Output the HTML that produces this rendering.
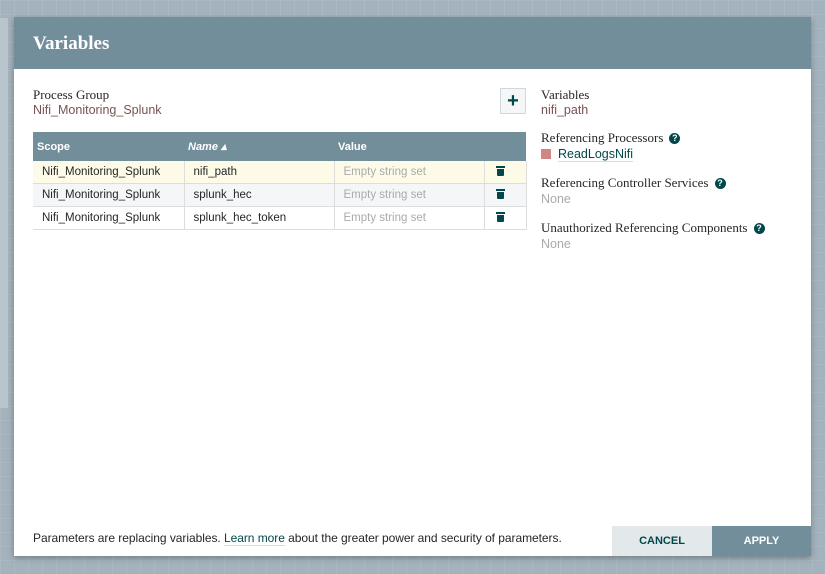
<!DOCTYPE html>
<html><head><style>
body{margin:0;width:825px;height:574px;background:#a3b2bc;position:relative;overflow:hidden;font-family:"Liberation Sans",sans-serif;}
.bg{position:absolute;inset:0;background-image:linear-gradient(rgba(255,255,255,.08) 1px,transparent 1px),linear-gradient(90deg,rgba(255,255,255,.08) 1px,transparent 1px);background-size:14px 14px;}
.side{position:absolute;left:0;top:18px;width:8px;height:390px;background:#b9c5cc;}
.dlg{position:absolute;left:14px;top:17px;width:797px;height:539px;background:#fff;box-shadow:0 2px 6px rgba(0,0,0,.3);}
.hdr{height:52px;background:#728e9b;color:#fff;font-family:"Liberation Serif",serif;font-weight:bold;font-size:19px;line-height:54px;padding-left:19px;}
.abs{position:absolute;font-size:12px;}
.lbl{color:#262626;font-family:"Liberation Serif",serif;font-size:13px;}
.val{color:#775351;font-size:12.5px;}
.none{color:#aaa;font-size:12.5px;}
table{position:absolute;left:19px;top:115px;border-collapse:collapse;font-size:11.5px;}
th{background:#728e9b;color:#fff;text-align:left;height:29px;padding:0 4px;font-size:11px;}
td{height:22px;padding:0 9px;border-right:1px solid #ddd;border-bottom:1px solid #ddd;color:#262626;}
td.t{padding:0 0 0 12px;}
.q{display:inline-block;width:11px;height:11px;border-radius:50%;background:#004849;color:#fff;font-size:9px;text-align:center;line-height:11px;font-weight:bold;font-family:"Liberation Sans";margin-left:6px;vertical-align:1px;}
.tr{display:inline-block;width:7px;height:7px;background:#004849;border-radius:0 0 1px 1px;position:relative;vertical-align:middle;top:1px;}
.tr:before{content:"";position:absolute;left:-1px;top:-3px;width:9px;height:2px;background:#004849;}
</style></head><body>
<div class="bg"></div><div class="side"></div>
<div class="dlg">
<div class="hdr">Variables</div>
<div class="abs lbl" style="left:19px;top:70px">Process Group</div>
<div class="abs val" style="left:19px;top:86px">Nifi_Monitoring_Splunk</div>
<div class="abs" style="left:486px;top:71px;width:24px;height:24px;border:1px solid #cfd8dc;background:#f4f6f7;text-align:center;line-height:24px;font-size:20px;font-weight:bold;color:#004849">+</div>
<table>
<tr><th style="width:143px">Scope</th><th style="width:142px;font-style:italic">Name ▴</th><th style="width:142px">Value</th><th style="width:34px"></th></tr>
<tr style="background:#fdfbe8"><td>Nifi_Monitoring_Splunk</td><td>nifi_path</td><td style="color:#aaa">Empty string set</td><td class="t"><span class="tr"></span></td></tr>
<tr style="background:#f4f6f7"><td>Nifi_Monitoring_Splunk</td><td>splunk_hec</td><td style="color:#aaa">Empty string set</td><td class="t"><span class="tr"></span></td></tr>
<tr><td>Nifi_Monitoring_Splunk</td><td>splunk_hec_token</td><td style="color:#aaa">Empty string set</td><td class="t"><span class="tr"></span></td></tr>
</table>
<div class="abs lbl" style="left:527px;top:70px">Variables</div>
<div class="abs val" style="left:527px;top:86px">nifi_path</div>
<div class="abs lbl" style="left:527px;top:113px">Referencing Processors<span class="q">?</span></div>
<div class="abs" style="left:527px;top:132px;width:10px;height:10px;background:#d18686"></div>
<div class="abs" style="left:544px;top:130px;color:#004849;font-size:12.5px;border-bottom:1px solid #cde">ReadLogsNifi</div>
<div class="abs lbl" style="left:527px;top:158px">Referencing Controller Services<span class="q">?</span></div>
<div class="abs none" style="left:527px;top:175px">None</div>
<div class="abs lbl" style="left:527px;top:203px">Unauthorized Referencing Components<span class="q">?</span></div>
<div class="abs none" style="left:527px;top:220px">None</div>
<div class="abs" style="left:19px;top:514px;color:#262626;font-size:12px;letter-spacing:-0.05px">Parameters are replacing variables. <span style="color:#004849;border-bottom:1px solid #cde">Learn more</span> about the greater power and security of parameters.</div>
<div class="abs" style="left:598px;top:509px;width:100px;height:30px;background:#e3e8eb;color:#004849;text-align:center;line-height:31px;font-size:11px;font-weight:bold">CANCEL</div>
<div class="abs" style="left:698px;top:509px;width:99px;height:30px;background:#728e9b;color:#fff;text-align:center;line-height:31px;font-size:11px;font-weight:bold">APPLY</div>
</div>
</body></html>
